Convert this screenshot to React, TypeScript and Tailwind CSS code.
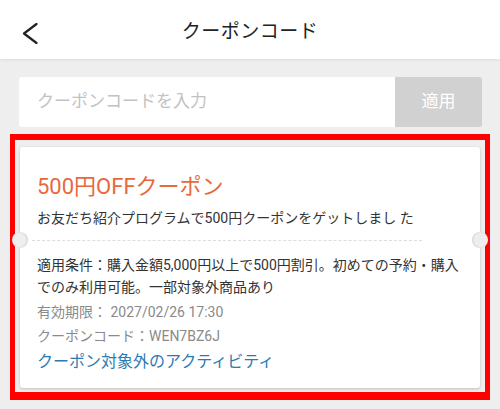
import React from "react";

const font = { fontFamily: 'Roboto, "Noto Sans CJK JP", "Noto Sans", sans-serif' };

const App = () => {
  return (
    <div className="w-[500px] h-[409px] bg-[#eeeeee] overflow-hidden" style={font}>
      {/* Header */}
      <header className="relative h-[59px] bg-white flex items-center justify-center pt-[6px] shadow-[0_1px_3px_rgba(0,0,0,0.08)]">
        <button className="absolute left-[22px] top-[23px]">
          <svg width="16" height="21" viewBox="0 0 16 21" fill="none">
            <polyline points="14.5,1 2,10.5 14.5,20" stroke="#222" strokeWidth="2.2" strokeLinecap="round" strokeLinejoin="round" />
          </svg>
        </button>
        <h1 className="text-[19px] text-[#222] tracking-[0.5px]">クーポンコード</h1>
      </header>

      {/* Code input */}
      <div className="mt-[18px] ml-[19px] mr-[18px] h-[50px] flex">
        <div className="flex-1 bg-white rounded-l-[3px] flex items-center pl-[18px] text-[17px] text-[#c2c2c2]">
          クーポンコードを入力
        </div>
        <div className="w-[87px] bg-[#d1d1d1] rounded-r-[3px] flex items-center justify-center text-[17px] text-white">
          適用
        </div>
      </div>

      {/* Coupon card (highlighted) */}
      <div className="mt-[7px] ml-[10px] mr-[10px] border-[5px] border-t-[6px] border-b-[8px] border-[#ff0000] pt-[7px] px-[5px] pb-[4px]">
        <div className="relative h-[241px] bg-white rounded-[3px] shadow-[0_1px_3px_rgba(0,0,0,0.2)] pt-[25px] pl-[17px] pr-[20px]">
          <div className="text-[22px] leading-[30px] text-[#e8693c]">500円OFFクーポン</div>
          <div className="mt-[5px] text-[14px] leading-[22px] text-[#333]">
            お友だち紹介プログラムで500円クーポンをゲットしまし た
          </div>

          <div className="mt-[11px] mb-[13px] h-0 border-t border-dashed border-[#dddddd] -ml-[5px] mr-[38px]" />
          <div className="absolute left-[-8px] top-[85px] w-4 h-4 rounded-full bg-[#eeeeee] shadow-[inset_-1px_0_2px_rgba(0,0,0,0.12)]" />
          <div className="absolute right-[-8px] top-[85px] w-4 h-4 rounded-full bg-[#eeeeee] shadow-[inset_1px_0_2px_rgba(0,0,0,0.12)]" />

          <div className="text-[14px] leading-[22px] text-[#333]">
            適用条件：購入金額5,000円以上で500円割引。初めての予約・購入でのみ利用可能。一部対象外商品あり
          </div>
          <div className="mt-[3px] text-[14px] leading-[22px] text-[#8a8a8a]">有効期限： 2027/02/26 17:30</div>
          <div className="mt-[2px] text-[14px] leading-[22px] text-[#8a8a8a]">クーポンコード：WEN7BZ6J</div>
          <div className="mt-[3px] text-[16px] leading-[24px] text-[#2b7bb3]">クーポン対象外のアクティビティ</div>
        </div>
      </div>
    </div>
  );
};

export default App;
